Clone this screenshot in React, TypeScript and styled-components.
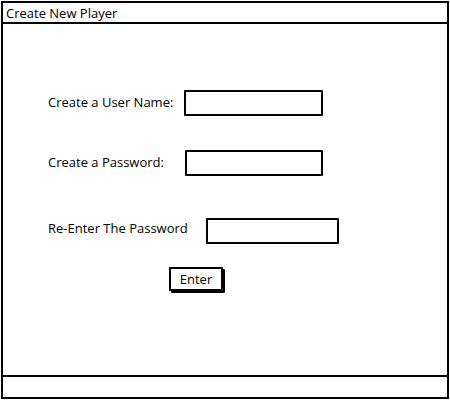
import React from "react";
import styled, { createGlobalStyle } from "styled-components";

const Global = createGlobalStyle`
  html, body { margin: 0; padding: 0; background: #fff; }
  body { font-family: "Open Sans", "Liberation Sans", sans-serif; color: #000; }
`;

const Window = styled.div`
  box-sizing: border-box;
  margin: 1px;
  width: 448px;
  height: 398px;
  border: 2px solid #000;
  display: flex;
  flex-direction: column;
  background: #fff;
`;

const TitleBar = styled.div`
  box-sizing: border-box;
  height: 21px;
  border-bottom: 2px solid #000;
  display: flex;
  align-items: center;
  padding-left: 3px;
  font-size: 13px;
`;

const Body = styled.div`
  flex: 1;
  display: flex;
  flex-direction: column;
  padding: 66px 0 0 45px;
`;

const StatusBar = styled.div`
  box-sizing: border-box;
  height: 22px;
  border-top: 2px solid #000;
`;

const Row = styled.div<{ $top: number; $lift?: number }>`
  display: flex;
  align-items: center;
  margin-top: ${(p) => p.$top}px;
  & > span { position: relative; top: ${(p) => -(p.$lift ?? 0)}px; }
`;

const Label = styled.span<{ $w: number }>`
  width: ${(p) => p.$w}px;
  font-size: 13px;
  white-space: nowrap;
`;

const Field = styled.div<{ $w: number }>`
  box-sizing: border-box;
  width: ${(p) => p.$w}px;
  height: 26px;
  border: 2px solid #000;
  border-radius: 1px;
  background: #fff;
`;

const Button = styled.button`
  box-sizing: border-box;
  margin: 23px 0 0 121px;
  width: 54px;
  height: 24px;
  border: 2px solid #000;
  border-radius: 1px;
  background: #fff;
  box-shadow: 2px 2px 0 #000;
  font-family: "Open Sans", "Liberation Sans", sans-serif;
  font-size: 13px;
  color: #000;
  padding: 0;
  align-self: flex-start;
`;

export default function App() {
  return (
    <>
      <Global />
      <Window>
        <TitleBar>Create New Player</TitleBar>
        <Body>
          <Row $top={0} $lift={1}>
            <Label $w={136}>Create a User Name:</Label>
            <Field $w={139} />
          </Row>
          <Row $top={34} $lift={1}>
            <Label $w={137}>Create a Password:</Label>
            <Field $w={138} />
          </Row>
          <Row $top={42} $lift={3}>
            <Label $w={158}>Re-Enter The Password</Label>
            <Field $w={133} />
          </Row>
          <Button>Enter</Button>
        </Body>
        <StatusBar />
      </Window>
    </>
  );
}
